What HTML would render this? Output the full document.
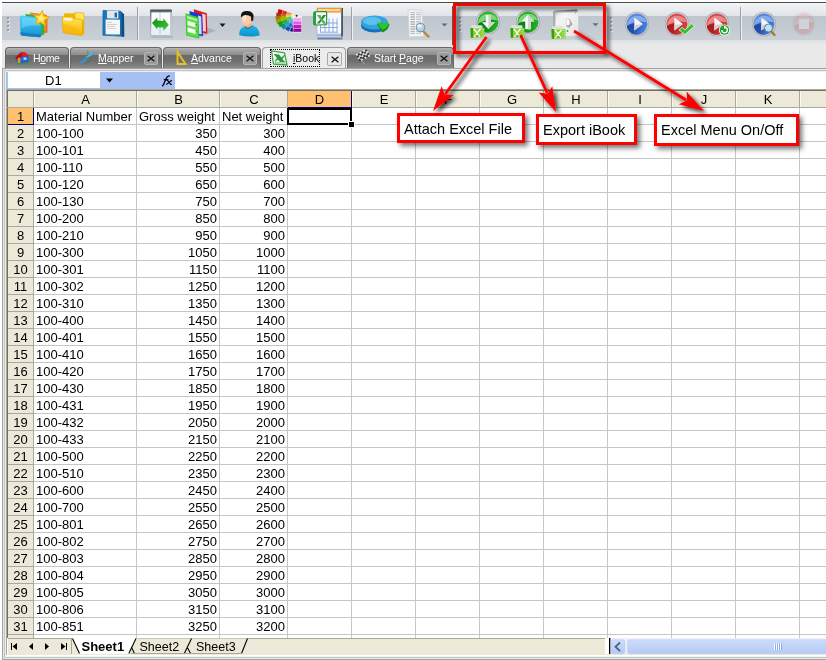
<!DOCTYPE html>
<html><head><meta charset="utf-8">
<style>
*{box-sizing:border-box}
body{margin:0;width:826px;height:660px;overflow:hidden;background:#fff;position:relative;font-family:"Liberation Sans",sans-serif;will-change:transform}
div,span,svg{position:absolute;display:block}
u{text-decoration:underline}
.tb{top:3px;height:41px;background:linear-gradient(#fbfbfc 0px,#f1f2f4 1px,#e1e4e8 13px,#bec5cd 13px,#cad0d6 37px,#dde1e4 37px,#e6e9eb 41px)}
.grip{width:2px;height:2px;background:#8a8e95;box-shadow:1px 1px 0 #fafafa}
.sep{width:1px;top:7px;height:33px;background:#9fa3a9;box-shadow:1px 0 0 #f0f1f2}
.tab{top:47px;height:21px;border:1px solid #676767;border-bottom:none;border-radius:4px 4px 0 0;background:linear-gradient(#b8b8b8 0px,#a4a4a4 2px,#8c8c8c 7px,#6b6b6b 7px,#6e6e6e 13px,#8a8a8a 20px);color:#fff;font-size:10.5px;line-height:13px}
.tab span{top:4px}
.tab.act{background:#ececec;border-color:#9c9c9c;color:#000}
.xb{top:4px;width:14px;height:13px;background:#9c9c9c;border:1px solid #b4b4b4;border-radius:2px}
.hdrrow{left:6px;top:89px;width:820px;height:19px;background:#ece9d8;border-top:1px solid #aca899;border-left:1px solid #aca899}
.ch{top:91px;height:16px;background:#ece9d8;font-size:13px;text-align:center;line-height:17px;color:#000;border-left:1px solid #fbfaf6}
.ch.sel{background:#ffc06f;border-left:none}
.vl{top:108px;width:1px;height:530px;background:#c6c6c6}
.vl.hb{top:91px;height:17px;background:#aca899}
.hl{left:34px;width:792px;height:1px;background:#c6c6c6}
.rh{left:8px;width:25px;height:16px;background:#ece9d8;font-size:13px;text-align:center;line-height:17px;color:#000}
.rh.sel{background:#ffc06f}
.rhl{left:8px;width:25px;height:1px;background:#aca899}
.c{font-size:13px;line-height:17px;color:#000;white-space:nowrap}
.c.r{text-align:right}
.note{height:31px;border:3px solid #f00;background:#fff;font-size:14.5px;line-height:26px;padding-left:4px;box-shadow:3px 3px 5px rgba(0,0,0,.55)}
</style></head><body>
<!-- frame -->
<div style="left:2px;top:44px;width:824px;height:24px;background:#e9e9e9"></div>
<div style="left:2px;top:2px;width:824px;height:1px;background:#4a4a4a"></div>
<div style="left:2px;top:68px;width:824px;height:592px;background:#a4a4a4"></div>
<div style="left:3px;top:69px;width:823px;height:590px;background:#e6e6e6"></div>
<div style="left:4px;top:70px;width:822px;height:588px;background:#c4c4c4"></div>
<div style="left:5px;top:71px;width:821px;height:586px;background:#eeeeee"></div>
<div style="left:6px;top:72px;width:820px;height:584px;background:#fff"></div>
<!-- toolbars -->
<div class="tb" style="left:2px;width:450px;border-radius:2px 5px 0 0"></div>
<div style="left:452px;top:6px;width:1px;height:39px;background:#5a5a5a"></div>
<div class="tb" style="left:456px;width:147px"></div>
<div class="tb" style="left:607px;width:219px"></div>
<svg style="left:0;top:0" width="826" height="60" viewBox="0 0 826 60">
<defs>
<linearGradient id="gBlue" x1="0" y1="0" x2="0" y2="1"><stop offset="0" stop-color="#47d0f8"/><stop offset="1" stop-color="#1590d4"/></linearGradient>
<linearGradient id="gYel" x1="0" y1="0" x2="0" y2="1"><stop offset="0" stop-color="#ffe45a"/><stop offset="1" stop-color="#f8b800"/></linearGradient>
<linearGradient id="gFlop" x1="0" y1="0" x2="1" y2="0"><stop offset="0" stop-color="#1a6fb4"/><stop offset="0.5" stop-color="#2a8ad0"/><stop offset="1" stop-color="#165c98"/></linearGradient>
<radialGradient id="gGreenBtn" cx="0.5" cy="0.35" r="0.65"><stop offset="0" stop-color="#60d860"/><stop offset="0.6" stop-color="#18b018"/><stop offset="1" stop-color="#0a8a10"/></radialGradient>
<radialGradient id="gBlueBtn" cx="0.5" cy="0.7" r="0.7"><stop offset="0" stop-color="#5a9af0"/><stop offset="0.7" stop-color="#2e64c8"/><stop offset="1" stop-color="#1a46a0"/></radialGradient>
<radialGradient id="gRedBtn" cx="0.5" cy="0.7" r="0.7"><stop offset="0" stop-color="#f06060"/><stop offset="0.7" stop-color="#d83030"/><stop offset="1" stop-color="#b01818"/></radialGradient>
<linearGradient id="gRing" x1="0" y1="0" x2="0" y2="1"><stop offset="0" stop-color="#d4d6da"/><stop offset="1" stop-color="#b4b6ba"/></linearGradient>
<linearGradient id="gXl" x1="0" y1="0" x2="0" y2="1"><stop offset="0" stop-color="#c8e890"/><stop offset="0.5" stop-color="#78c020"/><stop offset="1" stop-color="#5aa010"/></linearGradient>
<linearGradient id="gSwitch" x1="0" y1="0" x2="1" y2="1"><stop offset="0" stop-color="#d8d8d8"/><stop offset="0.3" stop-color="#f4f4f4"/><stop offset="1" stop-color="#e6e6e6"/></linearGradient>
</defs>
<rect x="8" y="18" width="2" height="2" fill="#e4e7ea"/><rect x="7" y="17" width="2" height="2" fill="#9ca0a6"/>
<rect x="8" y="22" width="2" height="2" fill="#e4e7ea"/><rect x="7" y="21" width="2" height="2" fill="#9ca0a6"/>
<rect x="8" y="26" width="2" height="2" fill="#e4e7ea"/><rect x="7" y="25" width="2" height="2" fill="#9ca0a6"/>
<rect x="8" y="30" width="2" height="2" fill="#e4e7ea"/><rect x="7" y="29" width="2" height="2" fill="#9ca0a6"/>
<rect x="460" y="18" width="2" height="2" fill="#e4e7ea"/><rect x="459" y="17" width="2" height="2" fill="#9ca0a6"/>
<rect x="460" y="22" width="2" height="2" fill="#e4e7ea"/><rect x="459" y="21" width="2" height="2" fill="#9ca0a6"/>
<rect x="460" y="26" width="2" height="2" fill="#e4e7ea"/><rect x="459" y="25" width="2" height="2" fill="#9ca0a6"/>
<rect x="460" y="30" width="2" height="2" fill="#e4e7ea"/><rect x="459" y="29" width="2" height="2" fill="#9ca0a6"/>
<rect x="611" y="18" width="2" height="2" fill="#e4e7ea"/><rect x="610" y="17" width="2" height="2" fill="#9ca0a6"/>
<rect x="611" y="22" width="2" height="2" fill="#e4e7ea"/><rect x="610" y="21" width="2" height="2" fill="#9ca0a6"/>
<rect x="611" y="26" width="2" height="2" fill="#e4e7ea"/><rect x="610" y="25" width="2" height="2" fill="#9ca0a6"/>
<rect x="611" y="30" width="2" height="2" fill="#e4e7ea"/><rect x="610" y="29" width="2" height="2" fill="#9ca0a6"/>
<rect x="137" y="7" width="1" height="33" fill="#9ea2a8"/><rect x="138" y="7" width="1" height="33" fill="#eef0f2"/>
<rect x="351" y="7" width="1" height="33" fill="#9ea2a8"/><rect x="352" y="7" width="1" height="33" fill="#eef0f2"/>
<rect x="740" y="7" width="1" height="33" fill="#9ea2a8"/><rect x="741" y="7" width="1" height="33" fill="#eef0f2"/>
<path d="M30,12.5 L45.5,14.5 Q47.5,15 47.5,17 L47.5,31.5 Q47.5,33.5 45.5,33 L31,31 Z" fill="#ee7428"/>
<path d="M30.5,13 L45,15 L45.5,31 L31,30 Z" fill="#f8a050" opacity="0.6"/>
<path d="M25.5,14 L42,16 Q44,16.3 44,18.3 L44.3,33.5 Q44.3,35.5 42.3,35.2 L26.5,33 Z" fill="#34b034"/>
<path d="M21.5,15.5 Q20,15.5 20,17.5 L20.5,34 Q20.5,35.5 22,35.8 L39.5,37.3 Q41.3,37.4 41.3,35.5 L41,19.5 Q41,17.8 39.3,17.6 Z" fill="url(#gBlue)"/>
<path d="M22,17 L39,19 L39.5,26 Q30,24 21.5,28 Z" fill="#8ee4fc" opacity="0.45"/>
<path d="M20.5,34 L20.5,32 Q30,33.5 41.2,34.5 L41.3,35.5 Q41.3,37.4 39.5,37.3 L22,35.8 Z" fill="#1478b8" opacity="0.8"/>
<path d="M42.36,10.38 L43.84,15.87 L49.37,17.16 L44.62,20.27 L45.10,25.93 L40.67,22.36 L35.43,24.57 L37.46,19.26 L33.74,14.96 L39.42,15.24Z" fill="#ffd51c" stroke="#eaa200" stroke-width="0.8" stroke-linejoin="round"/>
<path d="M41.78,13.87 L42.44,16.91 L45.46,17.67 L42.77,19.24 L42.97,22.34 L40.65,20.27 L37.76,21.43 L39.02,18.58 L37.03,16.19 L40.12,16.50Z" fill="#fff6a8" opacity="0.7"/>
<path d="M64,14.5 Q64,13.2 65.5,13.2 L73.5,13.5 L75.5,12.3 L82.5,12.6 Q84.3,12.8 84.3,14.5 L84.3,34.5 L64.5,31.5 Z" fill="#f2b400"/>
<path d="M75.5,13 L82.5,13.3 Q83.6,13.5 83.6,15 L83.6,20 L75.5,19 Z" fill="#ffe866"/>
<path d="M62.3,17.5 Q62.2,16.3 63.5,16.4 L72.5,17 L74,18.7 L81,19.2 Q82.6,19.3 82.6,21 L82.3,34 Q82.3,35.6 80.7,35.4 L64.3,33 Q63,32.8 63,31.3 Z" fill="url(#gYel)" stroke="#eaa000" stroke-width="0.7"/>
<path d="M64.3,18.2 L71.8,18.6 L71.8,20.6 L64.4,20.3 Z" fill="#ffffff"/>
<path d="M63,24 Q74,24 82.5,33 L82.3,34 Q82.3,35.6 80.7,35.4 L64.3,33 Q63,32.8 63,31.3 Z" fill="#f6b000" opacity="0.45"/>
<path d="M103.5,10 L120.5,10.8 L124,14.5 L124.2,36.8 L103,35.8 Q102.5,35.7 102.5,35 L102.6,11 Q102.7,10 103.5,10 Z" fill="url(#gFlop)"/>
<path d="M121.5,12 L124,14.5 L124.2,36.8 L121.8,36.6 Z" fill="#0f4c84"/>
<path d="M107,10.6 L118.3,11 L118.3,18.5 L107,18.2 Z" fill="#e4e6e8"/><rect x="114.6" y="12.6" width="2.4" height="4.8" fill="#1d6aa8"/>
<path d="M105.6,19.4 L120,19.8 L120,34.6 L105.6,34.2 Z" fill="#f6f6f6"/>
<rect x="107" y="22" width="5" height="0.6" fill="#8a9098" opacity="0.6"/>
<rect x="107" y="24" width="10" height="0.6" fill="#8a9098" opacity="0.6"/>
<rect x="107" y="26" width="8" height="0.6" fill="#8a9098" opacity="0.6"/>
<rect x="107" y="28" width="9" height="0.6" fill="#8a9098" opacity="0.6"/>
<defs><linearGradient id="gFrame" x1="0" y1="0" x2="0" y2="1"><stop offset="0" stop-color="#3e464e"/><stop offset="0.1" stop-color="#6e767e"/><stop offset="0.5" stop-color="#9aa2aa"/><stop offset="1" stop-color="#b8c0c8"/></linearGradient><linearGradient id="gArr" x1="0" y1="0" x2="1" y2="1"><stop offset="0" stop-color="#0e8a16"/><stop offset="1" stop-color="#3cd03c"/></linearGradient></defs>
<rect x="151" y="35.5" width="22" height="2.5" fill="#a0a6ae" opacity="0.6"/>
<path d="M151,9.4 L171,9.4 Q172,9.4 172,10.5 L172.2,36.5 L150,36.5 L150,10.5 Q150,9.4 151,9.4 Z" fill="url(#gFrame)"/>
<rect x="151.4" y="12.4" width="18.8" height="22.3" fill="#fcfdfd"/>
<rect x="151.4" y="27" width="18.8" height="7.7" fill="#e6f0f8"/>
<rect x="170.2" y="12" width="1.6" height="24" fill="#c8d0d8"/>
<path d="M160,12.5 L160,34.5" stroke="#8a96a2" stroke-width="0.9" stroke-dasharray="1,1"/>
<path d="M152,23 L157.3,17.6 L157.3,20.4 L163.3,20.9 L163.3,18.2 L168.9,25 L163.3,30.8 L163.3,27.6 L157.3,27.2 L157.3,29.6 Z" fill="url(#gArr)"/>
<path d="M199,37.5 L216,30.5 L206,27 L199,30 Z" fill="#8a929c" opacity="0.45"/>
<path d="M193.8,9.2 L206.8,13.2 L207.3,33.8 L195,31 Z" fill="#e01818"/><path d="M202,13.5 L205.6,14.7 L205.9,31.8 L202.5,31 Z" fill="#fff0f0" opacity="0.85"/>
<path d="M189.5,11 L202.3,15 L203,36.2 L190.2,33.2 Z" fill="#1838e0"/><path d="M198,15.5 L201.2,16.5 L201.7,34.6 L198.5,33.8 Z" fill="#f0f4ff" opacity="0.85"/>
<path d="M185.5,13.3 L198.5,17.3 L199.2,38.5 L186.2,35.5 Z" fill="#3cc830"/>
<path d="M186.6,15 L197.4,18.4 L197.9,37 L187.2,34.4 Z" fill="#60e048"/>
<path d="M187,16 L197.2,19.2 L197.3,21 L187,18 Z" fill="#c0f0b0"/>
<path d="M187.4,20.8 L195.2,23 L195.3,27.2 L187.5,25 Z" fill="#fafff8"/><path d="M187.6,27.6 L195.4,29.8 L195.5,34 L187.7,31.8 Z" fill="#fafff8"/>
<rect x="195.8" y="24" width="1.2" height="1.2" fill="#8060a0"/><rect x="196" y="30.6" width="1.2" height="1.2" fill="#8060a0"/>
<path d="M219.5,23.5 L225.5,23.5 L222.5,27 Z" fill="#1a1a1a"/>
<defs><linearGradient id="gShirt" x1="0" y1="0" x2="0" y2="1"><stop offset="0" stop-color="#1cb8f0"/><stop offset="1" stop-color="#0f90c8"/></linearGradient></defs>
<path d="M239.3,35.2 Q239,28.2 244.5,26.6 L252.5,25.6 Q259.6,27.2 259.6,35.6 Q249,37.8 239.3,35.2 Z" fill="url(#gShirt)"/>
<path d="M245,21.5 L251.2,21.5 L251.5,26.8 Q248,29.8 245,27.3 Z" fill="#eab088"/>
<path d="M244.6,26.6 Q248,30.3 252.2,25.9" stroke="#1d4858" stroke-width="0.9" fill="none"/>
<path d="M241.4,17 Q241.8,14 246.4,14 Q251,14.2 251.1,17.2 L251.1,21.8 Q250.2,25.2 246.6,25.4 Q242.6,25.2 241.9,21.8 Z" fill="#f9caa4"/>
<path d="M242.5,16.5 Q244,15 247,15.3 L246,22 Q243,21.5 242.6,19.5 Z" fill="#fde6d6" opacity="0.8"/>
<path d="M240.9,16.2 Q240.6,11.6 246,11 Q252.2,10.6 253.6,15.2 L253.2,20.6 L251.3,21.2 L251.1,16.7 Q249.2,15 245.2,15.1 Q242.4,15.2 241.6,17.6 Z" fill="#141414"/>
<path d="M282.70,10.33 L278.50,8.96 L277.50,13.64 L281.88,14.11 Z" fill="#d80000"/>
<path d="M287.18,11.80 L282.98,10.43 L282.18,14.15 L286.57,14.62 Z" fill="#e82828"/>
<path d="M291.65,13.27 L287.46,11.90 L286.87,14.65 L291.26,15.13 Z" fill="#f08878"/>
<path d="M296.13,14.74 L291.94,13.36 L291.55,15.16 L295.94,15.63 Z" fill="#f8e0d0"/>
<path d="M280.98,13.31 L276.32,12.77 L276.28,17.83 L280.94,17.38 Z" fill="#983818"/>
<path d="M285.96,13.88 L281.30,13.34 L281.26,17.35 L285.93,16.90 Z" fill="#b86020"/>
<path d="M290.94,14.45 L286.28,13.91 L286.25,16.87 L290.92,16.43 Z" fill="#e8c048"/>
<path d="M295.91,15.02 L291.26,14.48 L291.24,16.40 L295.91,15.95 Z" fill="#f8f0b0"/>
<path d="M280.26,16.00 L275.41,16.22 L276.19,21.38 L280.89,20.15 Z" fill="#a07800"/>
<path d="M285.44,15.76 L280.59,15.98 L281.21,20.06 L285.91,18.84 Z" fill="#c0a000"/>
<path d="M290.62,15.52 L285.77,15.74 L286.23,18.75 L290.93,17.53 Z" fill="#e0e040"/>
<path d="M295.80,15.28 L290.95,15.50 L291.25,17.44 L295.94,16.21 Z" fill="#e8f4b0"/>
<path d="M280.58,18.57 L275.83,19.52 L277.37,24.48 L281.82,22.57 Z" fill="#a89a00"/>
<path d="M285.65,17.56 L280.90,18.51 L282.12,22.44 L286.57,20.52 Z" fill="#98c000"/>
<path d="M290.72,16.55 L285.97,17.50 L286.87,20.39 L291.32,18.48 Z" fill="#60c848"/>
<path d="M295.79,15.54 L291.04,16.48 L291.62,18.35 L296.07,16.44 Z" fill="#c0ecb0"/>
<path d="M282.00,21.11 L277.67,22.77 L279.93,27.23 L283.83,24.71 Z" fill="#10a010"/>
<path d="M286.63,19.34 L282.30,21.00 L284.09,24.54 L287.99,22.02 Z" fill="#28b030"/>
<path d="M291.26,17.57 L286.92,19.23 L288.25,21.84 L292.15,19.32 Z" fill="#48c8a0"/>
<path d="M295.89,15.80 L291.55,17.46 L292.41,19.15 L296.31,16.63 Z" fill="#c0f0e8"/>
<path d="M284.37,23.61 L280.72,25.96 L283.68,29.64 L286.76,26.58 Z" fill="#108c98"/>
<path d="M288.27,21.09 L284.62,23.45 L286.97,26.37 L290.05,23.31 Z" fill="#20a8b8"/>
<path d="M292.17,18.58 L288.52,20.93 L290.26,23.10 L293.35,20.04 Z" fill="#48c0e0"/>
<path d="M296.07,16.07 L292.42,18.42 L293.56,19.84 L296.64,16.78 Z" fill="#d0ecf8"/>
<path d="M287.71,25.91 L285.01,28.90 L288.59,31.50 L290.60,28.02 Z" fill="#1050b0"/>
<path d="M290.58,22.72 L287.89,25.71 L290.74,27.78 L292.75,24.30 Z" fill="#2070d0"/>
<path d="M293.46,19.53 L290.77,22.52 L292.89,24.06 L294.90,20.58 Z" fill="#5090e0"/>
<path d="M296.34,16.34 L293.65,19.33 L295.04,20.34 L297.06,16.86 Z" fill="#c8d8f4"/>
<path d="M291.45,27.49 L289.83,30.90 L293.77,32.30 L294.66,28.62 Z" fill="#0818a0"/>
<path d="M293.19,23.85 L291.56,27.26 L294.72,28.37 L295.60,24.70 Z" fill="#2030c0"/>
<path d="M294.93,20.21 L293.30,23.62 L295.66,24.45 L296.54,20.78 Z" fill="#5060d8"/>
<path d="M296.66,16.56 L295.04,19.97 L296.60,20.53 L297.48,16.85 Z" fill="#d0d0f4"/>
<rect x="292.8" y="16" width="9" height="16.5" fill="#f4f0f4"/>
<rect x="293.3" y="17.8" width="8" height="3.2" fill="#f4a8f4"/>
<rect x="293.3" y="21.4" width="8" height="3.2" fill="#e060e0"/>
<rect x="293.3" y="25.0" width="8" height="3.2" fill="#b820b8"/>
<rect x="293.3" y="28.6" width="8" height="3.2" fill="#980098"/>
<circle cx="296.6" cy="15.8" r="1" fill="#222"/>
<path d="M316.5,34 L342,34 L342.5,39.5 L317.5,39.5 Z" fill="#6e82a0"/><path d="M316,33 L341.5,33 L342,37.5 L317,37.5 Z" fill="#c0d0e8"/><path d="M316.5,35.5 L342,35.5" stroke="#8aa0c0" stroke-width="0.6"/>
<rect x="317" y="8" width="25" height="26" fill="#f6f9ff" stroke="#9ab0d0" stroke-width="0.7"/>
<rect x="341.2" y="8" width="1.8" height="28.5" fill="#4a5464"/>
<rect x="317" y="8" width="24.5" height="4.6" fill="#f39a2a"/><rect x="318" y="9" width="22" height="2.2" fill="#ffd59a"/>
<path d="M320,27.5 L338,27.5 M320,32.2 L338,32.2 M320,23 L338,23" stroke="#7d9bd4" stroke-width="0.8" fill="none"/>
<path d="M320.5,23 L320.5,32.2 M325,23 L325,32.2 M329,18.5 L329,32.2 M333,18.5 L333,32.2 M337,18.5 L337,32.2" stroke="#7d9bd4" stroke-width="0.8" fill="none"/>
<path d="M315.2,11.2 L325.5,11 Q327.2,11 327.2,12.8 L327.2,24.2 Q327.2,25.3 326,25.3 L315.2,25.5 Q313.2,25.5 313.2,23.5 L313.2,13.2 Q313.2,11.2 315.2,11.2 Z" fill="#1c8c34"/>
<path d="M316,12.3 L326,12.2 L326.2,24.2 L315.8,24.4 Z" fill="#f4fbf2"/>
<path d="M313.5,13 L316,12.3 L315.8,24.4 L313.5,24 Z" fill="#2aa040"/>
<path d="M317.2,15 L320.2,15 L321.5,17.6 L323.3,15 L326,15 L322.8,19.4 L326.2,23.4 L323.2,23.4 L321.5,20.8 L319.6,23.4 L316.8,23.4 L320.2,19.4 Z" fill="#1e8a30"/>
<path d="M317.2,15 L320.2,15 L323,19.5 L326.2,23.4 L323.2,23.4 L320.2,19.4 Z" fill="#6cc070" opacity="0.7"/>
<ellipse cx="374.5" cy="25.5" rx="13.5" ry="7" fill="#1a70b8"/>
<ellipse cx="374.5" cy="22.5" rx="13.5" ry="7" fill="#2ea4e0"/>
<ellipse cx="372" cy="21" rx="9" ry="4" fill="#80d4f8" opacity="0.6"/>
<path d="M377,24 L389.5,24 Q389.5,29 382.5,32.5 Z" fill="#109010"/>
<path d="M376.5,22.5 L389,23 Q389,27 382.5,30 Z" fill="#30c030"/>
<path d="M408,9.5 L422,10 L424,36.5 L409,37 Z" fill="#f0f2f4" stroke="#c8ccd0" stroke-width="0.7"/>
<rect x="410.5" y="12.5" width="4.5" height="0.6" fill="#8a8e94"/><rect x="416" y="12.5" width="5" height="0.6" fill="#a4a8ae"/>
<rect x="410.5" y="14.2" width="4.5" height="0.6" fill="#8a8e94"/><rect x="416" y="14.2" width="5" height="0.6" fill="#a4a8ae"/>
<rect x="410.5" y="15.9" width="4.5" height="0.6" fill="#8a8e94"/><rect x="416" y="15.9" width="5" height="0.6" fill="#a4a8ae"/>
<rect x="410.5" y="17.6" width="4.5" height="0.6" fill="#8a8e94"/><rect x="416" y="17.6" width="5" height="0.6" fill="#a4a8ae"/>
<rect x="410.5" y="19.3" width="4.5" height="0.6" fill="#8a8e94"/><rect x="416" y="19.3" width="5" height="0.6" fill="#a4a8ae"/>
<rect x="410.5" y="21.0" width="4.5" height="0.6" fill="#8a8e94"/><rect x="416" y="21.0" width="5" height="0.6" fill="#a4a8ae"/>
<rect x="410.5" y="22.7" width="4.5" height="0.6" fill="#8a8e94"/><rect x="416" y="22.7" width="5" height="0.6" fill="#a4a8ae"/>
<rect x="410.5" y="24.4" width="4.5" height="0.6" fill="#8a8e94"/><rect x="416" y="24.4" width="5" height="0.6" fill="#a4a8ae"/>
<rect x="410.5" y="26.1" width="4.5" height="0.6" fill="#8a8e94"/><rect x="416" y="26.1" width="5" height="0.6" fill="#a4a8ae"/>
<rect x="410.5" y="27.8" width="4.5" height="0.6" fill="#8a8e94"/><rect x="416" y="27.8" width="5" height="0.6" fill="#a4a8ae"/>
<rect x="410.5" y="29.5" width="4.5" height="0.6" fill="#8a8e94"/><rect x="416" y="29.5" width="5" height="0.6" fill="#a4a8ae"/>
<rect x="410.5" y="31.2" width="4.5" height="0.6" fill="#8a8e94"/><rect x="416" y="31.2" width="5" height="0.6" fill="#a4a8ae"/>
<rect x="410.5" y="32.9" width="4.5" height="0.6" fill="#8a8e94"/><rect x="416" y="32.9" width="5" height="0.6" fill="#a4a8ae"/>
<path d="M423,31 L428.5,36.5" stroke="#b08a40" stroke-width="2.4" stroke-linecap="round"/>
<circle cx="420.5" cy="27.5" r="4.3" fill="#b0d4f0" stroke="#7a8a9a" stroke-width="1"/>
<ellipse cx="419.5" cy="26" rx="2.5" ry="1.6" fill="#e8f4fc"/>
<path d="M441.5,23.5 L447.5,23.5 L444.5,26.5 Z" fill="#5c6c84"/>
<g opacity="1">
<circle cx="488" cy="22" r="12.2" fill="#a4a6aa"/><circle cx="488" cy="22" r="11.399999999999999" fill="#e6e7e9"/><circle cx="488" cy="22" r="10.9" fill="#b0b2b6"/>
<circle cx="488" cy="22" r="10.3" fill="#1cb81c"/>
<path d="M477.7,23.5 Q482,18.5 489,19 Q495,19.5 498.1,20 A10.3,10.3 0 0 0 477.7,23.5 Z" fill="#c8f0c8" opacity="0"/>
<defs><linearGradient id="gd0a7a12" x1="0" y1="0" x2="1" y2="0.3"><stop offset="0" stop-color="#0a7a12" stop-opacity="1"/><stop offset="0.45" stop-color="#0a7a12" stop-opacity="0.85"/><stop offset="1" stop-color="#0a7a12" stop-opacity="0"/></linearGradient></defs>
<path d="M477.7,24.5 Q483,18.5 489.5,18.8 Q495,19 498.3,20.5 A10.3,10.3 0 0 1 477.7,24.5 Z" fill="url(#gd0a7a12)"/>
<path d="M478.0,23.5 A10.3,10.3 0 0 1 498.0,20.5 Q490,18 478.0,23.5 Z" fill="#c8f0c8" opacity="0.55"/>
</g>
<path d="M485.8,15 L491,15 L491,22.2 L495,22.2 L488.4,29 L482,22.2 L485.8,22.2 Z" fill="#f6f6f6"/>
<path d="M488.4,15 L491,15 L491,22.2 L495,22.2 L488.4,29 Z" fill="#d0d0d0"/>
<path d="M470.5,28 L484.5,28 L484.5,37.5 L470.8,37.8 Z" fill="#86d030"/>
<path d="M471.5,25.3 L481.5,25.3 Q482.5,25.5 482.5,26.5 L482.5,28.5 L471,28.5 L471,26 Z" fill="#d8e4d4"/>
<path d="M470.5,28 L473,28 L473,37.7 L470.8,37.8 Z" fill="#3e9a12"/>
<path d="M474,29 L477,33 L480.5,29 M474.5,37 L477.2,33.5 L480,37" stroke="#f4ffe8" stroke-width="1.5" fill="none"/>
<path d="M475,36.5 Q477.2,33.5 479.5,36.5 Z" fill="#4aaa10"/>
<path d="M482,29 L482,37.5 M483.5,29 L483.5,37.5" stroke="#d8f4b0" stroke-width="0.6" stroke-dasharray="1,0.8"/>
<g opacity="1">
<circle cx="528" cy="22" r="12.2" fill="#a4a6aa"/><circle cx="528" cy="22" r="11.399999999999999" fill="#e6e7e9"/><circle cx="528" cy="22" r="10.9" fill="#b0b2b6"/>
<circle cx="528" cy="22" r="10.3" fill="#1cb81c"/>
<path d="M517.7,23.5 Q522,18.5 529,19 Q535,19.5 538.0999999999999,20 A10.3,10.3 0 0 0 517.7,23.5 Z" fill="#c8f0c8" opacity="0"/>
<defs><linearGradient id="gd0a7a12" x1="0" y1="0" x2="1" y2="0.3"><stop offset="0" stop-color="#0a7a12" stop-opacity="1"/><stop offset="0.45" stop-color="#0a7a12" stop-opacity="0.85"/><stop offset="1" stop-color="#0a7a12" stop-opacity="0"/></linearGradient></defs>
<path d="M517.7,24.5 Q523,18.5 529.5,18.8 Q535,19 538.3,20.5 A10.3,10.3 0 0 1 517.7,24.5 Z" fill="url(#gd0a7a12)"/>
<path d="M518.0,23.5 A10.3,10.3 0 0 1 538.0,20.5 Q530,18 518.0,23.5 Z" fill="#c8f0c8" opacity="0.55"/>
</g>
<path d="M528,14.8 L534.5,21.6 L530.8,21.6 L530.8,29.2 L525.2,29.2 L525.2,21.6 L521.5,21.6 Z" fill="#f6f6f6"/>
<path d="M528,14.8 L534.5,21.6 L530.8,21.6 L530.8,29.2 L528,29.2 Z" fill="#d4d4d4"/>
<path d="M510.5,28 L524.5,28 L524.5,37.5 L510.8,37.8 Z" fill="#86d030"/>
<path d="M511.5,25.3 L521.5,25.3 Q522.5,25.5 522.5,26.5 L522.5,28.5 L511,28.5 L511,26 Z" fill="#d8e4d4"/>
<path d="M510.5,28 L513,28 L513,37.7 L510.8,37.8 Z" fill="#3e9a12"/>
<path d="M514,29 L517,33 L520.5,29 M514.5,37 L517.2,33.5 L520,37" stroke="#f4ffe8" stroke-width="1.5" fill="none"/>
<path d="M515,36.5 Q517.2,33.5 519.5,36.5 Z" fill="#4aaa10"/>
<path d="M522,29 L522,37.5 M523.5,29 L523.5,37.5" stroke="#d8f4b0" stroke-width="0.6" stroke-dasharray="1,0.8"/>
<defs><linearGradient id="gPlateTop" x1="0" y1="0" x2="0" y2="1"><stop offset="0" stop-color="#3a3a3a"/><stop offset="1" stop-color="#3a3a3a" stop-opacity="0"/></linearGradient><linearGradient id="gPlateLeft" x1="0" y1="0" x2="1" y2="0"><stop offset="0" stop-color="#6a6a6a"/><stop offset="1" stop-color="#6a6a6a" stop-opacity="0"/></linearGradient></defs>
<path d="M554,10.8 L576.6,9.4 Q578.2,9.3 578.2,11 L578.3,34.6 Q578.3,36.1 576.7,36.1 L555,36.6 Q553.5,36.6 553.5,35.1 L553.3,11.8 Q553.3,10.8 554,10.8 Z" fill="url(#gSwitch)"/>
<path d="M554.5,10.8 L576.6,9.4 L577.5,10 L577.5,12.5 L555,13.2 Z" fill="url(#gPlateTop)" opacity="0.9"/>
<path d="M553.4,11.5 L556,12 L556.2,30 L553.5,30.5 Z" fill="url(#gPlateLeft)" opacity="0.8"/>
<circle cx="557" cy="13.8" r="0.6" fill="#909090"/><circle cx="575.5" cy="12.8" r="0.6" fill="#909090"/>
<path d="M566,19.5 Q568.5,18 570.5,20 L572.5,24.5 L569,28 L566.5,26.5 Z" fill="#a8aaac"/><path d="M566.3,19.6 Q568.5,18.6 569.8,20.6 L569.5,24.5 Q567.5,25.5 566.4,24.5 Z" fill="#fbfbfb"/>
<circle cx="567.5" cy="31" r="0.9" fill="#30b030"/>
<path d="M551.5,29 L565.5,29 L565.5,38.5 L551.8,38.8 Z" fill="#86d030"/>
<path d="M552.5,26.3 L562.5,26.3 Q563.5,26.5 563.5,27.5 L563.5,29.5 L552,29.5 L552,27 Z" fill="#d8e4d4"/>
<path d="M551.5,29 L554,29 L554,38.7 L551.8,38.8 Z" fill="#3e9a12"/>
<path d="M555,30 L558,34 L561.5,30 M555.5,38 L558.2,34.5 L561,38" stroke="#f4ffe8" stroke-width="1.5" fill="none"/>
<path d="M556,37.5 Q558.2,34.5 560.5,37.5 Z" fill="#4aaa10"/>
<path d="M563,30 L563,38.5 M564.5,30 L564.5,38.5" stroke="#d8f4b0" stroke-width="0.6" stroke-dasharray="1,0.8"/>
<path d="M592.5,23.3 L598.5,23.3 L595.5,26.3 Z" fill="#5c6c84"/>
<g opacity="1">
<circle cx="637" cy="24" r="12.2" fill="#a4a6aa"/><circle cx="637" cy="24" r="11.399999999999999" fill="#e6e7e9"/><circle cx="637" cy="24" r="10.9" fill="#b0b2b6"/>
<circle cx="637" cy="24" r="10.3" fill="#4a86e8"/>
<path d="M626.7,25.5 Q631,20.5 638,21 Q644,21.5 647.0999999999999,22 A10.3,10.3 0 0 0 626.7,25.5 Z" fill="#b0c8f0" opacity="0"/>
<defs><linearGradient id="gd1a44a4" x1="0" y1="0" x2="1" y2="0.3"><stop offset="0" stop-color="#1a44a4" stop-opacity="1"/><stop offset="0.45" stop-color="#1a44a4" stop-opacity="0.85"/><stop offset="1" stop-color="#1a44a4" stop-opacity="0"/></linearGradient></defs>
<path d="M626.7,26.5 Q632,20.5 638.5,20.8 Q644,21 647.3,22.5 A10.3,10.3 0 0 1 626.7,26.5 Z" fill="url(#gd1a44a4)"/>
<path d="M627.0,25.5 A10.3,10.3 0 0 1 647.0,22.5 Q639,20 627.0,25.5 Z" fill="#b0c8f0" opacity="0.55"/>
<path d="M634.3,17.5 L643,24 L634.3,30.5 Z" fill="#f4f4f4"/><path d="M634.3,25 L643,24 L634.3,30.5 Z" fill="#d2d2d2"/>
</g>
<g opacity="1">
<circle cx="677" cy="24" r="12.2" fill="#a4a6aa"/><circle cx="677" cy="24" r="11.399999999999999" fill="#e6e7e9"/><circle cx="677" cy="24" r="10.9" fill="#b0b2b6"/>
<circle cx="677" cy="24" r="10.3" fill="#e04444"/>
<path d="M666.7,25.5 Q671,20.5 678,21 Q684,21.5 687.0999999999999,22 A10.3,10.3 0 0 0 666.7,25.5 Z" fill="#f8c0c0" opacity="0"/>
<defs><linearGradient id="gda81818" x1="0" y1="0" x2="1" y2="0.3"><stop offset="0" stop-color="#a81818" stop-opacity="1"/><stop offset="0.45" stop-color="#a81818" stop-opacity="0.85"/><stop offset="1" stop-color="#a81818" stop-opacity="0"/></linearGradient></defs>
<path d="M666.7,26.5 Q672,20.5 678.5,20.8 Q684,21 687.3,22.5 A10.3,10.3 0 0 1 666.7,26.5 Z" fill="url(#gda81818)"/>
<path d="M667.0,25.5 A10.3,10.3 0 0 1 687.0,22.5 Q679,20 667.0,25.5 Z" fill="#f8c0c0" opacity="0.55"/>
<path d="M674.3,17.5 L683,24 L674.3,30.5 Z" fill="#f4f4f4"/><path d="M674.3,25 L683,24 L674.3,30.5 Z" fill="#d2d2d2"/>
</g>
<path d="M679,30 L682.3,27.3 L685,30 L691.5,23.8 L694.2,26.3 L685,34.5 Z" fill="#34c030" stroke="#f0fff0" stroke-width="0.7"/>
<g opacity="1">
<circle cx="717" cy="24" r="12.2" fill="#a4a6aa"/><circle cx="717" cy="24" r="11.399999999999999" fill="#e6e7e9"/><circle cx="717" cy="24" r="10.9" fill="#b0b2b6"/>
<circle cx="717" cy="24" r="10.3" fill="#e04444"/>
<path d="M706.7,25.5 Q711,20.5 718,21 Q724,21.5 727.0999999999999,22 A10.3,10.3 0 0 0 706.7,25.5 Z" fill="#f8c0c0" opacity="0"/>
<defs><linearGradient id="gda81818" x1="0" y1="0" x2="1" y2="0.3"><stop offset="0" stop-color="#a81818" stop-opacity="1"/><stop offset="0.45" stop-color="#a81818" stop-opacity="0.85"/><stop offset="1" stop-color="#a81818" stop-opacity="0"/></linearGradient></defs>
<path d="M706.7,26.5 Q712,20.5 718.5,20.8 Q724,21 727.3,22.5 A10.3,10.3 0 0 1 706.7,26.5 Z" fill="url(#gda81818)"/>
<path d="M707.0,25.5 A10.3,10.3 0 0 1 727.0,22.5 Q719,20 707.0,25.5 Z" fill="#f8c0c0" opacity="0.55"/>
<path d="M714.3,17.5 L723,24 L714.3,30.5 Z" fill="#f4f4f4"/><path d="M714.3,25 L723,24 L714.3,30.5 Z" fill="#d2d2d2"/>
</g>
<circle cx="724.5" cy="30" r="5.6" fill="#fff"/><circle cx="724.5" cy="30" r="4.8" fill="#18a830"/><path d="M721.8,30 A2.8,2.8 0 1 0 724.5,27.2" stroke="#fff" stroke-width="1.4" fill="none"/><path d="M724,25.5 L726.5,27.2 L724,29 Z" fill="#fff"/>
<g opacity="1">
<circle cx="764" cy="24" r="12.2" fill="#a4a6aa"/><circle cx="764" cy="24" r="11.399999999999999" fill="#e6e7e9"/><circle cx="764" cy="24" r="10.9" fill="#b0b2b6"/>
<circle cx="764" cy="24" r="10.3" fill="#4a86e8"/>
<path d="M753.7,25.5 Q758,20.5 765,21 Q771,21.5 774.0999999999999,22 A10.3,10.3 0 0 0 753.7,25.5 Z" fill="#b0c8f0" opacity="0"/>
<defs><linearGradient id="gd1a44a4" x1="0" y1="0" x2="1" y2="0.3"><stop offset="0" stop-color="#1a44a4" stop-opacity="1"/><stop offset="0.45" stop-color="#1a44a4" stop-opacity="0.85"/><stop offset="1" stop-color="#1a44a4" stop-opacity="0"/></linearGradient></defs>
<path d="M753.7,26.5 Q759,20.5 765.5,20.8 Q771,21 774.3,22.5 A10.3,10.3 0 0 1 753.7,26.5 Z" fill="url(#gd1a44a4)"/>
<path d="M754.0,25.5 A10.3,10.3 0 0 1 774.0,22.5 Q766,20 754.0,25.5 Z" fill="#b0c8f0" opacity="0.55"/>
<path d="M761.3,17.5 L770,24 L761.3,30.5 Z" fill="#f4f4f4"/><path d="M761.3,25 L770,24 L761.3,30.5 Z" fill="#d2d2d2"/>
</g>
<path d="M770,30 L774.5,35" stroke="#a07830" stroke-width="2.2" stroke-linecap="round"/><circle cx="768.5" cy="28" r="4" fill="#c4e0f4" stroke="#5a7890" stroke-width="0.9"/>
<g opacity="0.2">
<circle cx="804" cy="24" r="12.2" fill="#a4a6aa"/><circle cx="804" cy="24" r="11.399999999999999" fill="#e6e7e9"/><circle cx="804" cy="24" r="10.9" fill="#b0b2b6"/>
<circle cx="804" cy="24" r="10.3" fill="#e04444"/>
<path d="M793.7,25.5 Q798,20.5 805,21 Q811,21.5 814.0999999999999,22 A10.3,10.3 0 0 0 793.7,25.5 Z" fill="#f8c0c0" opacity="0"/>
<defs><linearGradient id="gdc03030" x1="0" y1="0" x2="1" y2="0.3"><stop offset="0" stop-color="#c03030" stop-opacity="1"/><stop offset="0.45" stop-color="#c03030" stop-opacity="0.85"/><stop offset="1" stop-color="#c03030" stop-opacity="0"/></linearGradient></defs>
<path d="M793.7,26.5 Q799,20.5 805.5,20.8 Q811,21 814.3,22.5 A10.3,10.3 0 0 1 793.7,26.5 Z" fill="url(#gdc03030)"/>
<path d="M794.0,25.5 A10.3,10.3 0 0 1 814.0,22.5 Q806,20 794.0,25.5 Z" fill="#f8c0c0" opacity="0.55"/>
<rect x="799" y="19" width="10" height="10" fill="#fff"/>
</g>
</svg>
<!-- tabs -->
<div class="tab" style="left:5px;width:64px"><span style="left:27px;letter-spacing:-0.4px">H<u>o</u>me</span></div>
<div class="tab" style="left:70px;width:92px"><span style="left:27px"><u>M</u>apper</span><div class="xb" style="left:73px"><svg style="left:0;top:0" width="12" height="11" viewBox="0 0 12 11"><path d="M2.6,2.8 L9.4,8.3 M9.4,2.8 L2.6,8.3" stroke="#151515" stroke-width="1.4"/></svg></div></div>
<div class="tab" style="left:163px;width:98px"><span style="left:27px"><u>A</u>dvance</span><div class="xb" style="left:79px"><svg style="left:0;top:0" width="12" height="11" viewBox="0 0 12 11"><path d="M2.6,2.8 L9.4,8.3 M9.4,2.8 L2.6,8.3" stroke="#151515" stroke-width="1.4"/></svg></div></div>
<div class="tab act" style="left:262px;width:84px"><span style="left:30px"><u>i</u>Book</span><div class="xb" style="left:64px;top:4px;width:15px;height:14px;background:#e8e8e8;border-color:#a8a8a8"><div style="left:1px;top:1px"><svg style="left:0;top:0" width="12" height="11" viewBox="0 0 12 11"><path d="M2.6,2.8 L9.4,8.3 M9.4,2.8 L2.6,8.3" stroke="#151515" stroke-width="1.4"/></svg></div></div></div>
<div class="tab" style="left:347px;width:107px"><span style="left:26px">Start <u>P</u>age</span><div class="xb" style="left:89px"><svg style="left:0;top:0" width="12" height="11" viewBox="0 0 12 11"><path d="M2.6,2.8 L9.4,8.3 M9.4,2.8 L2.6,8.3" stroke="#151515" stroke-width="1.4"/></svg></div></div>
<svg style="left:0;top:0" width="826" height="72" viewBox="0 0 826 72">
<path d="M16.5,57.5 L22,53 L28.5,55.5 L28.5,62 L22,63.5 L16.5,61.8 Z" fill="#2a5ec8"/>
<path d="M15,58 L21,52.2 L24.5,52 L29.5,55.8 L22.5,56.2 Z" fill="#e81c1c"/><path d="M15,58 L21,52.2 L22.5,56.2 L17,59.5 Z" fill="#b01010"/>
<rect x="17.8" y="57.8" width="2.6" height="5" fill="#e89020"/><rect x="23.5" y="57.5" width="3" height="2.3" fill="#b8d8ff"/>
<path d="M15.5,62.5 Q22,65 29,62 L28.8,63.5 Q22,65.8 16,63.8 Z" fill="#30a030"/>
<path d="M81,62.5 L86.5,58.5 L87,57 L93.5,53" stroke="#3a90d8" stroke-width="2.4" stroke-linecap="round" stroke-linejoin="round" opacity="0.85"/>
<path d="M87.2,56.8 L93,53.2" stroke="#58b0f8" stroke-width="1.8" stroke-linecap="round"/>
<path d="M87.8,50.5 L87.8,65" stroke="#22a838" stroke-width="1.1" stroke-dasharray="1.2,0.9"/>
<path d="M84,64.5 L92,59.5" stroke="#404040" stroke-width="0.6" opacity="0.5"/>
<path d="M177.5,52 L185.5,64 L177.5,64 Z" fill="none" stroke="#e8c020" stroke-width="1.9" stroke-linejoin="miter"/>
<path d="M271.5,50.8 L284.5,52.8 L287,65 L273.5,64 Z" fill="#f4fbf4" stroke="#4aa050" stroke-width="1.3" stroke-linejoin="round"/>
<path d="M273.5,54 L279,54.5 L281.5,57.5 L284,55 L285,55.2 L282.5,59 L285.5,62.5 L280,62 L278,59.5 L275.5,61.8 L274.5,61.6 L277,58 Z" fill="#2a9a38"/>
<path d="M275,62.5 L285.5,63.2" stroke="#8ac890" stroke-width="1"/>
</svg><div style="left:270px;top:49px;width:50px;height:18px;border:1px dotted #000"></div><svg style="left:0;top:0" width="826" height="72" viewBox="0 0 826 72">
<g transform="rotate(-28 364 55)">
<rect x="357.0" y="50.5" width="2" height="2" fill="#f4f4f4" opacity="0.85"/>
<rect x="357.0" y="52.5" width="2" height="2" fill="#2a2a2a" opacity="0.85"/>
<rect x="357.0" y="54.5" width="2" height="2" fill="#f4f4f4" opacity="0.85"/>
<rect x="357.0" y="56.5" width="2" height="2" fill="#2a2a2a" opacity="0.85"/>
<rect x="359.0" y="51.1" width="2" height="2" fill="#2a2a2a" opacity="0.85"/>
<rect x="359.0" y="53.1" width="2" height="2" fill="#f4f4f4" opacity="0.85"/>
<rect x="359.0" y="55.1" width="2" height="2" fill="#2a2a2a" opacity="0.85"/>
<rect x="359.0" y="57.1" width="2" height="2" fill="#f4f4f4" opacity="0.85"/>
<rect x="361.0" y="50.5" width="2" height="2" fill="#f4f4f4" opacity="0.85"/>
<rect x="361.0" y="52.5" width="2" height="2" fill="#2a2a2a" opacity="0.85"/>
<rect x="361.0" y="54.5" width="2" height="2" fill="#f4f4f4" opacity="0.85"/>
<rect x="361.0" y="56.5" width="2" height="2" fill="#2a2a2a" opacity="0.85"/>
<rect x="363.0" y="51.1" width="2" height="2" fill="#2a2a2a" opacity="0.85"/>
<rect x="363.0" y="53.1" width="2" height="2" fill="#f4f4f4" opacity="0.85"/>
<rect x="363.0" y="55.1" width="2" height="2" fill="#2a2a2a" opacity="0.85"/>
<rect x="363.0" y="57.1" width="2" height="2" fill="#f4f4f4" opacity="0.85"/>
<rect x="365.0" y="50.5" width="2" height="2" fill="#f4f4f4" opacity="0.85"/>
<rect x="365.0" y="52.5" width="2" height="2" fill="#2a2a2a" opacity="0.85"/>
<rect x="365.0" y="54.5" width="2" height="2" fill="#f4f4f4" opacity="0.85"/>
<rect x="365.0" y="56.5" width="2" height="2" fill="#2a2a2a" opacity="0.85"/>
<rect x="367.0" y="51.1" width="2" height="2" fill="#2a2a2a" opacity="0.85"/>
<rect x="367.0" y="53.1" width="2" height="2" fill="#f4f4f4" opacity="0.85"/>
<rect x="367.0" y="55.1" width="2" height="2" fill="#2a2a2a" opacity="0.85"/>
<rect x="367.0" y="57.1" width="2" height="2" fill="#f4f4f4" opacity="0.85"/>
</g>
<path d="M358.5,57 L365,64.5" stroke="#c8c8c8" stroke-width="0.8" opacity="0.7"/>
</svg>
<!-- formula bar -->
<div style="left:6px;top:72px;width:94px;height:17px;background:#fff;border-left:2px solid #a4c0f4;border-bottom:1px solid #a4c0f4"></div>
<div style="left:100px;top:72px;width:75px;height:17px;background:#a4c0f4"></div>
<div style="left:45px;top:72px;font-size:13px;line-height:17px">D1</div>
<svg style="left:100px;top:72px" width="75" height="17" viewBox="0 0 75 17"><path d="M6,6.5 L13,6.5 L9.5,10.5 Z" fill="#000"/><path d="M62.2,14.2 Q63.8,13 65,9 Q66.5,3.8 69.8,3.8" stroke="#000" stroke-width="1.3" fill="none"/><path d="M63.8,7.6 L68.4,7.6" stroke="#000" stroke-width="1.1"/><path d="M66.3,8.2 Q67.6,8 68.6,9.6 L70.3,12 Q70.8,12.7 71.8,12.3 M71.8,8.2 L66.2,12.6" stroke="#000" stroke-width="1.2" fill="none"/></svg>
<div class="hdrrow"></div>
<div class="ch" style="left:34px;width:102px">A</div>
<div class="vl hb" style="left:136px"></div>
<div class="ch" style="left:137px;width:82px">B</div>
<div class="vl hb" style="left:219px"></div>
<div class="ch" style="left:220px;width:67px">C</div>
<div class="vl hb" style="left:287px"></div>
<div class="ch sel" style="left:288px;width:63px">D</div>
<div class="vl hb" style="left:351px"></div>
<div class="ch" style="left:352px;width:63px">E</div>
<div class="vl hb" style="left:415px"></div>
<div class="ch" style="left:416px;width:63px">F</div>
<div class="vl hb" style="left:479px"></div>
<div class="ch" style="left:480px;width:63px">G</div>
<div class="vl hb" style="left:543px"></div>
<div class="ch" style="left:544px;width:63px">H</div>
<div class="vl hb" style="left:607px"></div>
<div class="ch" style="left:608px;width:63px">I</div>
<div class="vl hb" style="left:671px"></div>
<div class="ch" style="left:672px;width:63px">J</div>
<div class="vl hb" style="left:735px"></div>
<div class="ch" style="left:736px;width:63px">K</div>
<div class="vl hb" style="left:799px"></div>
<div class="ch" style="left:800px;width:63px">L</div>
<div class="vl hb" style="left:863px"></div>
<div class="rh sel" style="top:108px">1</div>
<div class="hl" style="top:124px"></div>
<div class="rhl" style="top:124px"></div>
<div class="c" style="top:108px;left:36px">Material Number</div>
<div class="c" style="top:108px;left:139px">Gross weight</div>
<div class="c" style="top:108px;left:222px">Net weight</div>
<div class="rh" style="top:125px">2</div>
<div class="hl" style="top:141px"></div>
<div class="rhl" style="top:141px"></div>
<div class="c" style="top:125px;left:36px">100-100</div>
<div class="c r" style="top:125px;left:137px;width:80px">350</div>
<div class="c r" style="top:125px;left:220px;width:65px">300</div>
<div class="rh" style="top:142px">3</div>
<div class="hl" style="top:158px"></div>
<div class="rhl" style="top:158px"></div>
<div class="c" style="top:142px;left:36px">100-101</div>
<div class="c r" style="top:142px;left:137px;width:80px">450</div>
<div class="c r" style="top:142px;left:220px;width:65px">400</div>
<div class="rh" style="top:159px">4</div>
<div class="hl" style="top:175px"></div>
<div class="rhl" style="top:175px"></div>
<div class="c" style="top:159px;left:36px">100-110</div>
<div class="c r" style="top:159px;left:137px;width:80px">550</div>
<div class="c r" style="top:159px;left:220px;width:65px">500</div>
<div class="rh" style="top:176px">5</div>
<div class="hl" style="top:192px"></div>
<div class="rhl" style="top:192px"></div>
<div class="c" style="top:176px;left:36px">100-120</div>
<div class="c r" style="top:176px;left:137px;width:80px">650</div>
<div class="c r" style="top:176px;left:220px;width:65px">600</div>
<div class="rh" style="top:193px">6</div>
<div class="hl" style="top:209px"></div>
<div class="rhl" style="top:209px"></div>
<div class="c" style="top:193px;left:36px">100-130</div>
<div class="c r" style="top:193px;left:137px;width:80px">750</div>
<div class="c r" style="top:193px;left:220px;width:65px">700</div>
<div class="rh" style="top:210px">7</div>
<div class="hl" style="top:226px"></div>
<div class="rhl" style="top:226px"></div>
<div class="c" style="top:210px;left:36px">100-200</div>
<div class="c r" style="top:210px;left:137px;width:80px">850</div>
<div class="c r" style="top:210px;left:220px;width:65px">800</div>
<div class="rh" style="top:227px">8</div>
<div class="hl" style="top:243px"></div>
<div class="rhl" style="top:243px"></div>
<div class="c" style="top:227px;left:36px">100-210</div>
<div class="c r" style="top:227px;left:137px;width:80px">950</div>
<div class="c r" style="top:227px;left:220px;width:65px">900</div>
<div class="rh" style="top:244px">9</div>
<div class="hl" style="top:260px"></div>
<div class="rhl" style="top:260px"></div>
<div class="c" style="top:244px;left:36px">100-300</div>
<div class="c r" style="top:244px;left:137px;width:80px">1050</div>
<div class="c r" style="top:244px;left:220px;width:65px">1000</div>
<div class="rh" style="top:261px">10</div>
<div class="hl" style="top:277px"></div>
<div class="rhl" style="top:277px"></div>
<div class="c" style="top:261px;left:36px">100-301</div>
<div class="c r" style="top:261px;left:137px;width:80px">1150</div>
<div class="c r" style="top:261px;left:220px;width:65px">1100</div>
<div class="rh" style="top:278px">11</div>
<div class="hl" style="top:294px"></div>
<div class="rhl" style="top:294px"></div>
<div class="c" style="top:278px;left:36px">100-302</div>
<div class="c r" style="top:278px;left:137px;width:80px">1250</div>
<div class="c r" style="top:278px;left:220px;width:65px">1200</div>
<div class="rh" style="top:295px">12</div>
<div class="hl" style="top:311px"></div>
<div class="rhl" style="top:311px"></div>
<div class="c" style="top:295px;left:36px">100-310</div>
<div class="c r" style="top:295px;left:137px;width:80px">1350</div>
<div class="c r" style="top:295px;left:220px;width:65px">1300</div>
<div class="rh" style="top:312px">13</div>
<div class="hl" style="top:328px"></div>
<div class="rhl" style="top:328px"></div>
<div class="c" style="top:312px;left:36px">100-400</div>
<div class="c r" style="top:312px;left:137px;width:80px">1450</div>
<div class="c r" style="top:312px;left:220px;width:65px">1400</div>
<div class="rh" style="top:329px">14</div>
<div class="hl" style="top:345px"></div>
<div class="rhl" style="top:345px"></div>
<div class="c" style="top:329px;left:36px">100-401</div>
<div class="c r" style="top:329px;left:137px;width:80px">1550</div>
<div class="c r" style="top:329px;left:220px;width:65px">1500</div>
<div class="rh" style="top:346px">15</div>
<div class="hl" style="top:362px"></div>
<div class="rhl" style="top:362px"></div>
<div class="c" style="top:346px;left:36px">100-410</div>
<div class="c r" style="top:346px;left:137px;width:80px">1650</div>
<div class="c r" style="top:346px;left:220px;width:65px">1600</div>
<div class="rh" style="top:363px">16</div>
<div class="hl" style="top:379px"></div>
<div class="rhl" style="top:379px"></div>
<div class="c" style="top:363px;left:36px">100-420</div>
<div class="c r" style="top:363px;left:137px;width:80px">1750</div>
<div class="c r" style="top:363px;left:220px;width:65px">1700</div>
<div class="rh" style="top:380px">17</div>
<div class="hl" style="top:396px"></div>
<div class="rhl" style="top:396px"></div>
<div class="c" style="top:380px;left:36px">100-430</div>
<div class="c r" style="top:380px;left:137px;width:80px">1850</div>
<div class="c r" style="top:380px;left:220px;width:65px">1800</div>
<div class="rh" style="top:397px">18</div>
<div class="hl" style="top:413px"></div>
<div class="rhl" style="top:413px"></div>
<div class="c" style="top:397px;left:36px">100-431</div>
<div class="c r" style="top:397px;left:137px;width:80px">1950</div>
<div class="c r" style="top:397px;left:220px;width:65px">1900</div>
<div class="rh" style="top:414px">19</div>
<div class="hl" style="top:430px"></div>
<div class="rhl" style="top:430px"></div>
<div class="c" style="top:414px;left:36px">100-432</div>
<div class="c r" style="top:414px;left:137px;width:80px">2050</div>
<div class="c r" style="top:414px;left:220px;width:65px">2000</div>
<div class="rh" style="top:431px">20</div>
<div class="hl" style="top:447px"></div>
<div class="rhl" style="top:447px"></div>
<div class="c" style="top:431px;left:36px">100-433</div>
<div class="c r" style="top:431px;left:137px;width:80px">2150</div>
<div class="c r" style="top:431px;left:220px;width:65px">2100</div>
<div class="rh" style="top:448px">21</div>
<div class="hl" style="top:464px"></div>
<div class="rhl" style="top:464px"></div>
<div class="c" style="top:448px;left:36px">100-500</div>
<div class="c r" style="top:448px;left:137px;width:80px">2250</div>
<div class="c r" style="top:448px;left:220px;width:65px">2200</div>
<div class="rh" style="top:465px">22</div>
<div class="hl" style="top:481px"></div>
<div class="rhl" style="top:481px"></div>
<div class="c" style="top:465px;left:36px">100-510</div>
<div class="c r" style="top:465px;left:137px;width:80px">2350</div>
<div class="c r" style="top:465px;left:220px;width:65px">2300</div>
<div class="rh" style="top:482px">23</div>
<div class="hl" style="top:498px"></div>
<div class="rhl" style="top:498px"></div>
<div class="c" style="top:482px;left:36px">100-600</div>
<div class="c r" style="top:482px;left:137px;width:80px">2450</div>
<div class="c r" style="top:482px;left:220px;width:65px">2400</div>
<div class="rh" style="top:499px">24</div>
<div class="hl" style="top:515px"></div>
<div class="rhl" style="top:515px"></div>
<div class="c" style="top:499px;left:36px">100-700</div>
<div class="c r" style="top:499px;left:137px;width:80px">2550</div>
<div class="c r" style="top:499px;left:220px;width:65px">2500</div>
<div class="rh" style="top:516px">25</div>
<div class="hl" style="top:532px"></div>
<div class="rhl" style="top:532px"></div>
<div class="c" style="top:516px;left:36px">100-801</div>
<div class="c r" style="top:516px;left:137px;width:80px">2650</div>
<div class="c r" style="top:516px;left:220px;width:65px">2600</div>
<div class="rh" style="top:533px">26</div>
<div class="hl" style="top:549px"></div>
<div class="rhl" style="top:549px"></div>
<div class="c" style="top:533px;left:36px">100-802</div>
<div class="c r" style="top:533px;left:137px;width:80px">2750</div>
<div class="c r" style="top:533px;left:220px;width:65px">2700</div>
<div class="rh" style="top:550px">27</div>
<div class="hl" style="top:566px"></div>
<div class="rhl" style="top:566px"></div>
<div class="c" style="top:550px;left:36px">100-803</div>
<div class="c r" style="top:550px;left:137px;width:80px">2850</div>
<div class="c r" style="top:550px;left:220px;width:65px">2800</div>
<div class="rh" style="top:567px">28</div>
<div class="hl" style="top:583px"></div>
<div class="rhl" style="top:583px"></div>
<div class="c" style="top:567px;left:36px">100-804</div>
<div class="c r" style="top:567px;left:137px;width:80px">2950</div>
<div class="c r" style="top:567px;left:220px;width:65px">2900</div>
<div class="rh" style="top:584px">29</div>
<div class="hl" style="top:600px"></div>
<div class="rhl" style="top:600px"></div>
<div class="c" style="top:584px;left:36px">100-805</div>
<div class="c r" style="top:584px;left:137px;width:80px">3050</div>
<div class="c r" style="top:584px;left:220px;width:65px">3000</div>
<div class="rh" style="top:601px">30</div>
<div class="hl" style="top:617px"></div>
<div class="rhl" style="top:617px"></div>
<div class="c" style="top:601px;left:36px">100-806</div>
<div class="c r" style="top:601px;left:137px;width:80px">3150</div>
<div class="c r" style="top:601px;left:220px;width:65px">3100</div>
<div class="rh" style="top:618px">31</div>
<div class="hl" style="top:634px"></div>
<div class="rhl" style="top:634px"></div>
<div class="c" style="top:618px;left:36px">100-851</div>
<div class="c r" style="top:618px;left:137px;width:80px">3250</div>
<div class="c r" style="top:618px;left:220px;width:65px">3200</div>
<div class="rh" style="top:635px"></div>
<div class="hl" style="top:651px"></div>
<div class="rhl" style="top:651px"></div>
<div class="vl" style="left:136px"></div>
<div class="vl" style="left:219px"></div>
<div class="vl" style="left:287px"></div>
<div class="vl" style="left:351px"></div>
<div class="vl" style="left:415px"></div>
<div class="vl" style="left:479px"></div>
<div class="vl" style="left:543px"></div>
<div class="vl" style="left:607px"></div>
<div class="vl" style="left:671px"></div>
<div class="vl" style="left:735px"></div>
<div class="vl" style="left:799px"></div>
<div class="vl" style="left:863px"></div>
<div style="left:33px;top:108px;width:1px;height:530px;background:#aca899"></div>
<div style="left:7px;top:90px;width:819px;height:1px;background:#716f64"></div>
<div style="left:7px;top:90px;width:1px;height:548px;background:#716f64"></div>
<div style="left:6px;top:89px;width:1px;height:566px;background:#aca899"></div>
<div style="left:7px;top:107px;width:819px;height:1px;background:#aca899"></div>
<div style="left:33px;top:91px;width:1px;height:16px;background:#aca899"></div>
<!-- selection -->
<div style="left:288px;top:107px;width:63px;height:1px;background:#000080"></div>
<div style="left:351px;top:91px;width:1px;height:17px;background:#000080"></div>
<div style="left:8px;top:124px;width:26px;height:1px;background:#000080"></div>
<div style="left:33px;top:108px;width:1px;height:17px;background:#000080"></div>
<div style="left:287px;top:108px;width:65px;height:17px;border:2px solid #000"></div>
<div style="left:348px;top:121px;width:7px;height:7px;background:#000;border:1px solid #fff"></div>
<!-- sheet tab bar -->
<div style="left:8px;top:638px;width:818px;height:17px;background:#ece9d8;border-top:1px solid #aca899"></div>
<div style="left:6px;top:655px;width:820px;height:1px;background:#fff"></div>
<div style="left:6px;top:656px;width:820px;height:1px;background:#f4f4f4"></div>
<div style="left:71px;top:639px;width:1px;height:15px;background:#aca899"></div>
<svg style="left:0;top:630px" width="826" height="30" viewBox="0 630 826 30">
<path d="M11,643 L12,643 L12,650 L11,650 Z M12.5,646.5 L17,643 L17,650 Z" fill="#000"/>
<path d="M29,646.5 L33,643 L33,650 Z" fill="#000"/>
<path d="M49,646.5 L45,643 L45,650 Z" fill="#000"/>
<path d="M61,643 L65.5,646.5 L61,650 Z M66,643 L67,643 L67,650 L66,650 Z" fill="#000"/>
<path d="M127,638.5 L192,638.5 L186,654 L134.5,654 Z" fill="#ece9d8"/>
<path d="M184.5,654 L192,638.5 L248,638.5 L242,654 Z" fill="#ece9d8"/>
<path d="M72,638 L136.5,638 L129,654 L79.5,654 Z" fill="#fff"/>
<path d="M72.5,638.5 L79.5,653.5 M136,638.5 L128.8,653.5" stroke="#000" stroke-width="1.1" fill="none"/>
<path d="M131.3,647 L134.5,653.5 M184.3,653.5 L191.5,638.5 M187.6,648 L190.6,653.5 M241.5,653.5 L247.5,638.5" stroke="#000" stroke-width="1.1" fill="none"/>
<path d="M186,653.5 L242,653.5 M131,653.5 L186,653.5" stroke="#aca899" stroke-width="1"/>
<text x="81.5" y="650.5" font-family="Liberation Sans" font-weight="bold" font-size="13" fill="#000">Sheet1</text>
<text x="139.5" y="650.5" font-family="Liberation Sans" font-size="12.5" fill="#000">Sheet2</text>
<text x="196" y="650.5" font-family="Liberation Sans" font-size="12.5" fill="#000">Sheet3</text>
<rect x="605" y="638" width="4" height="16" fill="#fff"/>
<rect x="609" y="638" width="1.6" height="16" fill="#000"/>
<rect x="610.6" y="638" width="216" height="16" fill="#eef2f8"/>
<defs><linearGradient id="sbg" x1="0" y1="0" x2="0" y2="1"><stop offset="0" stop-color="#cddcfb"/><stop offset="1" stop-color="#b4c9f5"/></linearGradient></defs>
<rect x="611" y="639.8" width="14" height="14" rx="2" fill="url(#sbg)" stroke="#bccdf4" stroke-width="0.6"/>
<path d="M620,642.5 L615.5,646.8 L620,651" stroke="#4d6185" stroke-width="1.8" fill="none"/>
<rect x="627.5" y="639.8" width="200" height="14" rx="2" fill="url(#sbg)" stroke="#bccdf4" stroke-width="0.6"/>
<path d="M774.5,643.5 L774.5,650 M776.5,643.5 L776.5,650 M778.5,643.5 L778.5,650 M780.5,643.5 L780.5,650" stroke="#fff" stroke-width="1"/>
<path d="M775.5,643.5 L775.5,650 M777.5,643.5 L777.5,650 M779.5,643.5 L779.5,650 M781.5,643.5 L781.5,650" stroke="#8eaaf0" stroke-width="1"/>
</svg>
<!-- notes -->
<div class="note" style="left:397px;top:113px;width:128px;height:30px">Attach Excel File</div>
<div class="note" style="left:536px;top:114px;width:101px">Export iBook</div>
<div class="note" style="left:654px;top:114px;width:145px;height:32px">Excel Menu On/Off</div>
<svg style="left:0;top:0" width="826" height="660" viewBox="0 0 826 660">
<defs><filter id="sh" x="-20%" y="-20%" width="140%" height="140%"><feGaussianBlur in="SourceAlpha" stdDeviation="2"/><feOffset dx="2.5" dy="2.5"/><feComponentTransfer><feFuncA type="linear" slope="0.75"/></feComponentTransfer><feMerge><feMergeNode/><feMergeNode in="SourceGraphic"/></feMerge></filter></defs>
<g filter="url(#sh)">
<rect x="454.5" y="4.5" width="150" height="48" fill="none" stroke="#ff0000" stroke-width="3"/>
<path d="M486.5,37 L445.3,94.0" stroke="#ff0000" stroke-width="2.8"/>
<path d="M433,111 L441.6,86.3 L444.7,94.8 L453.7,95.1 Z" fill="#ff0000"/>
<path d="M520.5,35 L547.2,92.9" stroke="#ff0000" stroke-width="2.8"/>
<path d="M556,112 L538.7,92.4 L547.6,93.8 L552.3,86.2 Z" fill="#ff0000"/>
<path d="M574,31 L686.1,100.0" stroke="#ff0000" stroke-width="2.8"/>
<path d="M704,111 L678.8,104.3 L687.0,100.5 L686.6,91.5 Z" fill="#ff0000"/>
</g>
</svg>
</body></html>
